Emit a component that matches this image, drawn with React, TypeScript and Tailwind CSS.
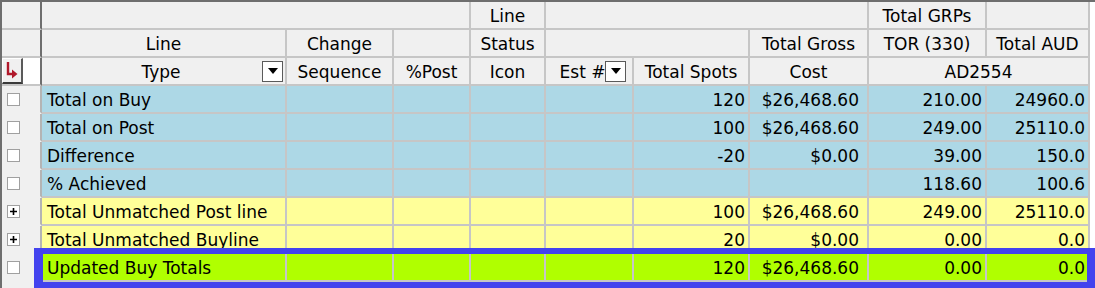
import type { ReactNode } from "react"

type Tone = "blue" | "yellow" | "green"

type TotalRow = {
  label: string
  spots: string
  cost: string
  tor: string
  aud: string
  tone: Tone
  expand?: boolean
}

const totals: TotalRow[] = [
  { label: "Total on Buy", spots: "120", cost: "$26,468.60", tor: "210.00", aud: "24960.0", tone: "blue" },
  { label: "Total on Post", spots: "100", cost: "$26,468.60", tor: "249.00", aud: "25110.0", tone: "blue" },
  { label: "Difference", spots: "-20", cost: "$0.00", tor: "39.00", aud: "150.0", tone: "blue" },
  { label: "% Achieved", spots: "", cost: "", tor: "118.60", aud: "100.6", tone: "blue" },
  { label: "Total Unmatched Post line", spots: "100", cost: "$26,468.60", tor: "249.00", aud: "25110.0", tone: "yellow", expand: true },
  { label: "Total Unmatched Buyline", spots: "20", cost: "$0.00", tor: "0.00", aud: "0.0", tone: "yellow", expand: true },
  { label: "Updated Buy Totals", spots: "120", cost: "$26,468.60", tor: "0.00", aud: "0.0", tone: "green" },
]

const toneBg: Record<Tone, string> = {
  blue: "bg-[#add8e6]",
  yellow: "bg-[#ffff99]",
  green: "bg-[#b0ff00]",
}

const line = "border-r-2 border-b-2 border-[#c6c6c6]"

function Head({ children, className = "" }: { children?: ReactNode; className?: string }) {
  return (
    <div className={`${line} bg-[#f0f0f0] flex items-center justify-center pt-[2px] ${className}`}>
      {children}
    </div>
  )
}

function DropButton() {
  return (
    <div className="w-[21px] h-[21px] -mt-[2px] border border-[#5a5a5a] bg-white flex items-center justify-center shrink-0">
      <svg width="10" height="6" viewBox="0 0 10 6">
        <path d="M0 0 L10 0 L5 6 Z" fill="#000" />
      </svg>
    </div>
  )
}

function RowMarker({ expand }: { expand?: boolean }) {
  return (
    <div className="border-r-2 border-b-2 border-[#b4b4b4] border-b-[#f0f0f0] bg-[#f0f0f0] flex items-center pl-[5px]">
      <div className="w-[13px] h-[13px] border border-[#a0a0a0] bg-white flex items-center justify-center">
        {expand && (
          <svg width="9" height="9" viewBox="0 0 9 9">
            <path d="M1 4.5 H8 M4.5 1 V8" stroke="#000" strokeWidth="1.6" />
          </svg>
        )}
      </div>
    </div>
  )
}

export default function App() {
  return (
    <div
      className="relative w-[1095px] h-[288px] overflow-hidden bg-white text-[17px] text-black leading-none"
      style={{ fontFamily: '"DejaVu Sans", Verdana, sans-serif' }}
    >
      <div className="border-t-2 border-[#6e6e6e]">
        <div className="w-[1090px] border-l-2 border-[#6e6e6e] grid grid-cols-[40px_245px_107px_77px_75px_88px_116px_119px_118px_103px] auto-rows-[28px]">
          {/* header row 1 */}
          <div className="border-r-2 border-b-2 border-[#c6c6c6] border-r-[#6e6e6e] bg-[#f0f0f0]" />
          <Head className="col-span-3" />
          <Head>Line</Head>
          <Head className="col-span-3" />
          <Head>Total GRPs</Head>
          <Head />

          {/* header row 2 */}
          <div className="border-r-2 border-b-2 border-[#c6c6c6] border-r-[#6e6e6e] bg-[#f0f0f0]" />
          <Head>Line</Head>
          <Head>Change</Head>
          <Head />
          <Head>Status</Head>
          <Head className="col-span-2" />
          <Head>Total Gross</Head>
          <Head>TOR (330)</Head>
          <Head>Total AUD</Head>

          {/* header row 3 */}
          <div className="border-r-2 border-b-2 border-[#c6c6c6] border-r-[#6e6e6e] flex">
            <div className="w-[21px] bg-[#f0f0f0] border-t border-l border-white border-r-2 border-b-2 border-r-[#5a5a5a] border-b-[#3a3a3a] flex items-center justify-center">
              <svg width="12" height="18" viewBox="0 0 12 18">
                <path d="M2 0 V12 H7" stroke="#b0182a" strokeWidth="2.4" fill="none" />
                <path d="M6 7.5 L11.5 12 L6 16.5 Z" fill="#b0182a" />
              </svg>
            </div>
            <div className="flex-1 bg-white" />
          </div>
          <Head className="justify-between pl-[18px] pr-[2px]">
            <span className="flex-1 text-center">Type</span>
            <DropButton />
          </Head>
          <Head>Sequence</Head>
          <Head>%Post</Head>
          <Head>Icon</Head>
          <Head className="justify-between pl-[9px] pr-[1px]">
            <span>Est #</span>
            <DropButton />
          </Head>
          <Head>Total Spots</Head>
          <Head>Cost</Head>
          <Head className="col-span-2">AD2554</Head>

          {/* summary rows */}
          {totals.map((row) => {
            const cell = `${line} ${toneBg[row.tone]} flex items-center pt-[2px]`
            return (
              <div key={row.label} className="contents">
                <RowMarker expand={row.expand} />
                <div className={`${cell} pl-[5px]`}>{row.label}</div>
                <div className={cell} />
                <div className={cell} />
                <div className={cell} />
                <div className={cell} />
                <div className={`${cell} justify-end pr-[3px]`}>{row.spots}</div>
                <div className={`${cell} justify-end pr-[8px]`}>{row.cost}</div>
                <div className={`${cell} justify-end pr-[3px]`}>{row.tor}</div>
                <div className={`${cell} justify-end pr-[3px]`}>{row.aud}</div>
              </div>
            )
          })}

          {/* next row, cut off */}
          <RowMarker />
          <div className="col-span-9 bg-white" />
        </div>
      </div>

      {/* highlight frame around the updated totals */}
      <div className="absolute left-[34px] top-[248px] w-[1061px] h-[40px] border-t-[6px] border-b-[6px] border-l-[9px] border-r-[8px] border-[#4343ee]" />
    </div>
  )
}
